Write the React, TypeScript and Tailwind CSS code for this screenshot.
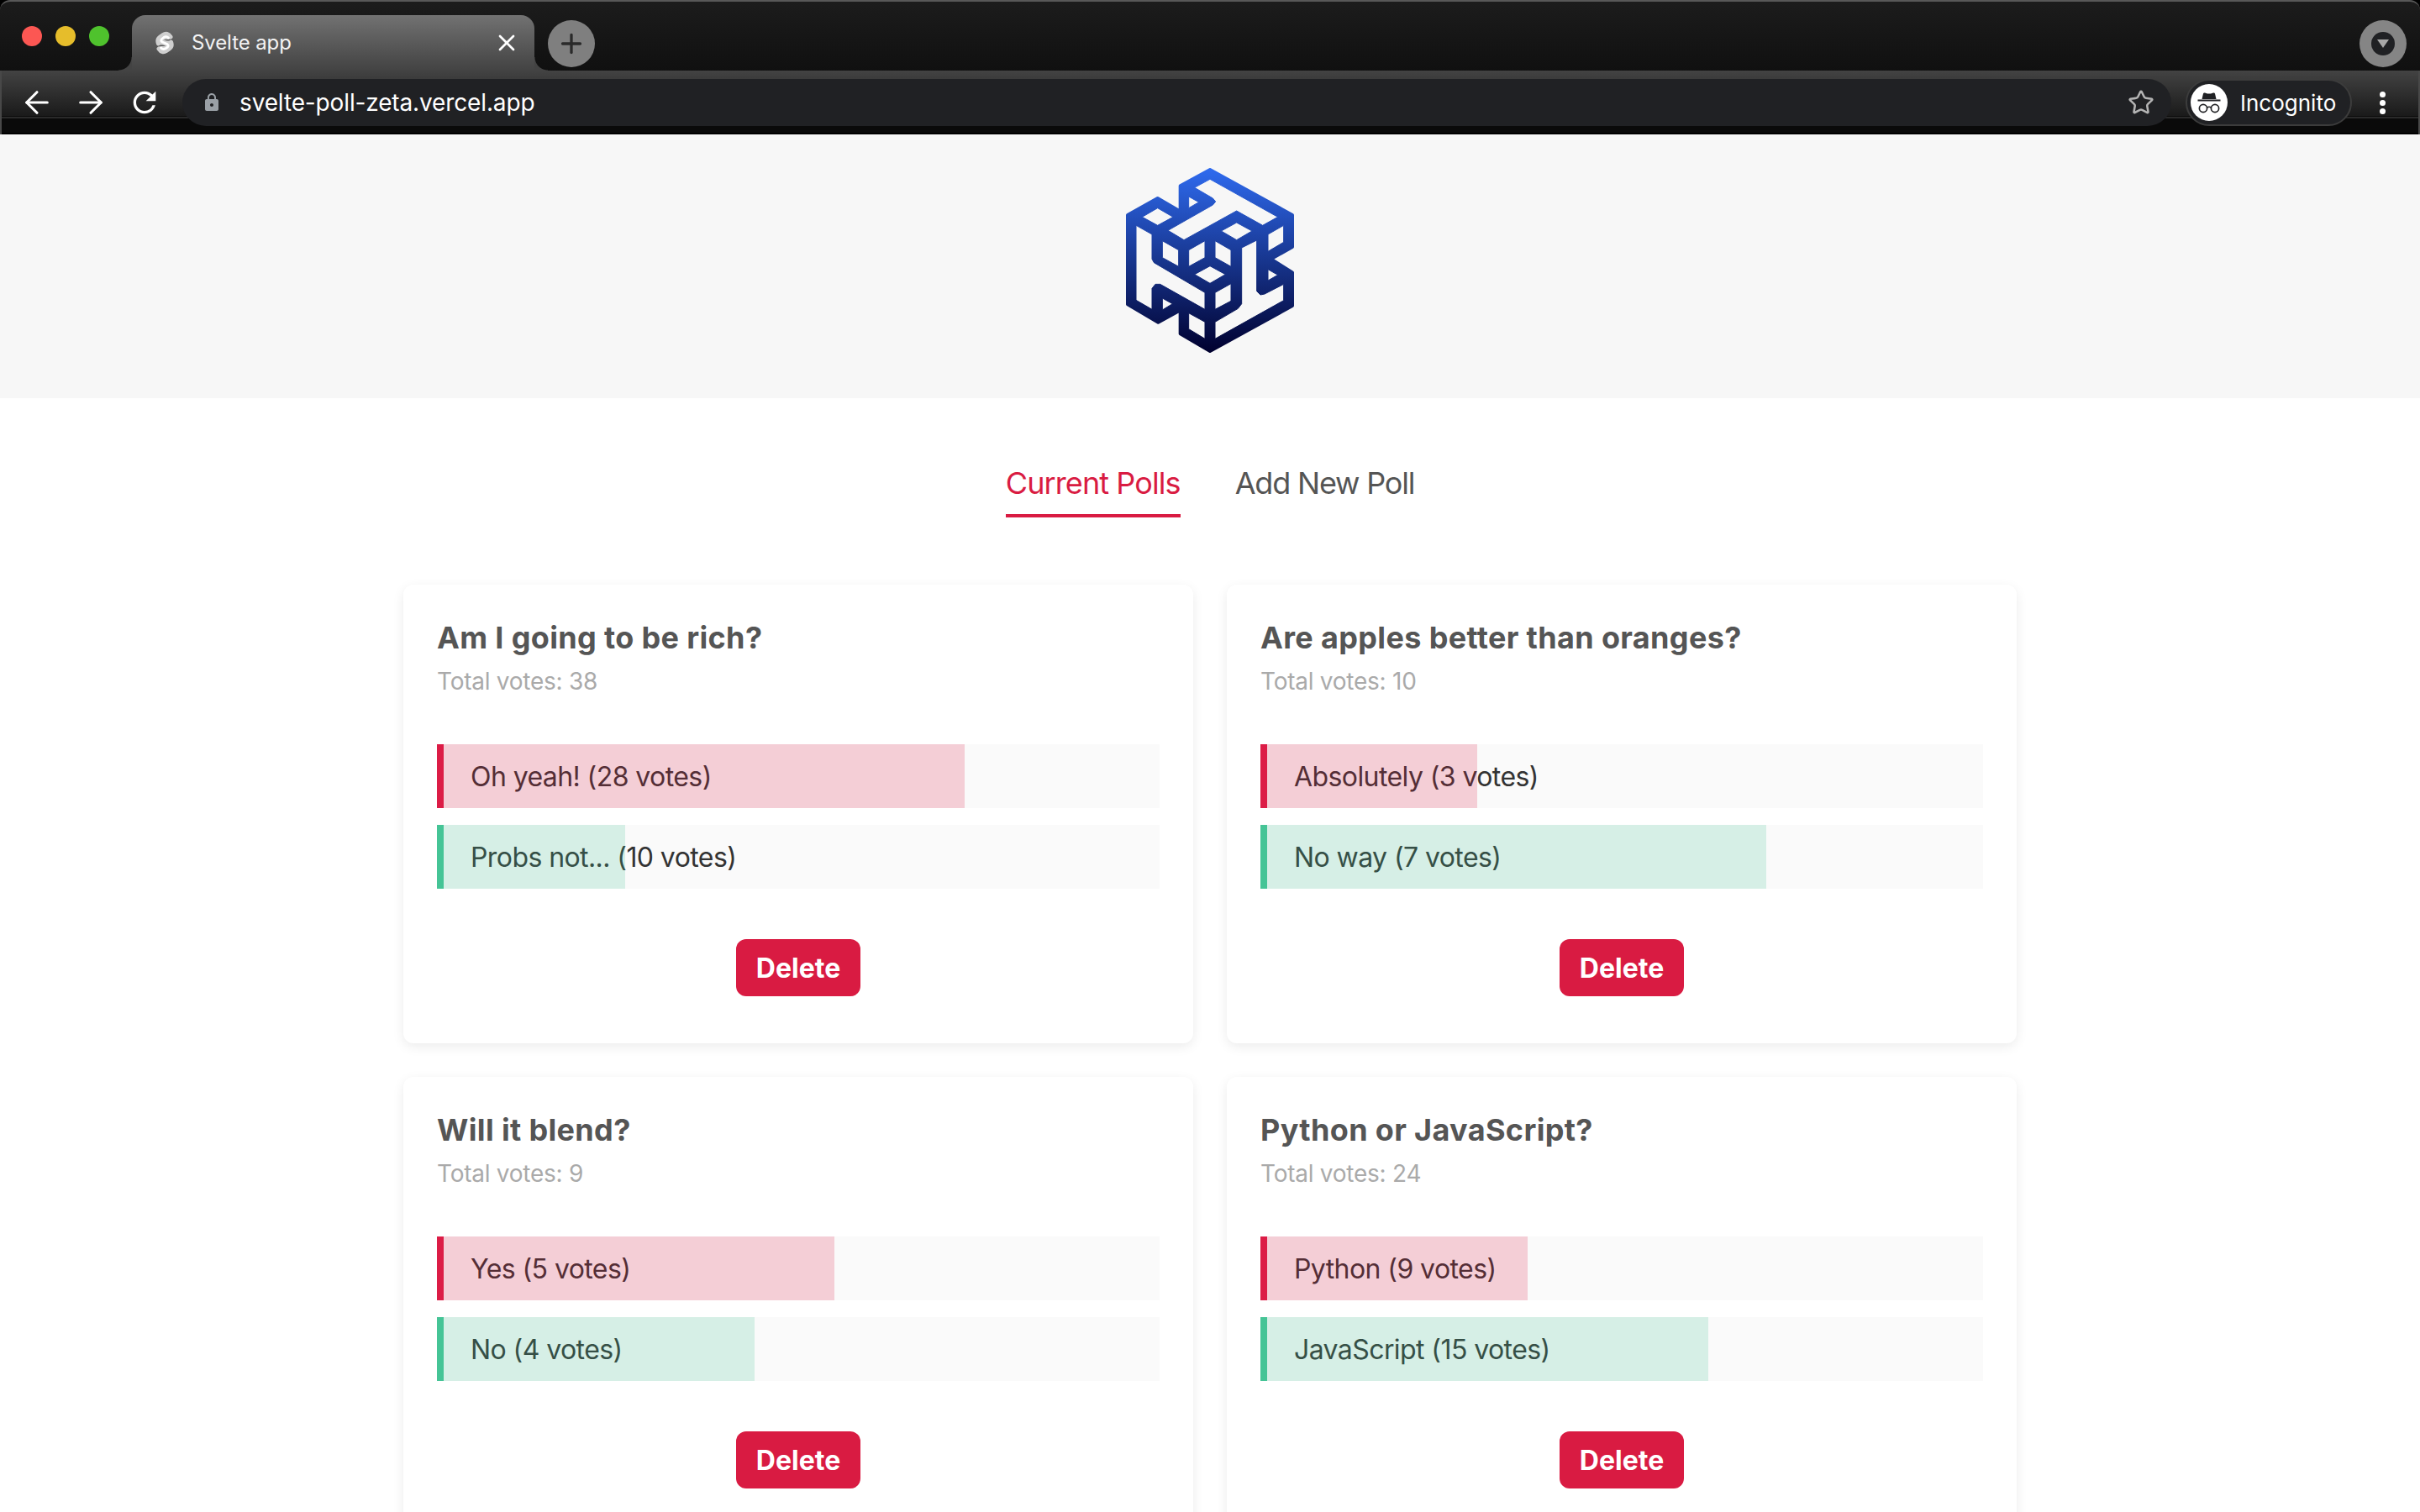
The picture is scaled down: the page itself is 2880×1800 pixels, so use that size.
import { ArrowLeft, ArrowRight, Plus, Star, X } from 'lucide-react';
import { MdLock, MdRefresh } from 'react-icons/md';

interface PollOption {
    label: string;
    votes: number;
}

interface Poll {
    question: string;
    options: [PollOption, PollOption];
}

const polls: Poll[] = [
    { question: 'Am I going to be rich?', options: [{ label: 'Oh yeah!', votes: 28 }, { label: 'Probs not...', votes: 10 }] },
    { question: 'Are apples better than oranges?', options: [{ label: 'Absolutely', votes: 3 }, { label: 'No way', votes: 7 }] },
    { question: 'Will it blend?', options: [{ label: 'Yes', votes: 5 }, { label: 'No', votes: 4 }] },
    { question: 'Python or JavaScript?', options: [{ label: 'Python', votes: 9 }, { label: 'JavaScript', votes: 15 }] },
];

// traced from the logo, in a 780 x 780 box
const logoOutline = '390,66 684,228 684,342 608,385 684,433 684,552 390,714 284,652 284,568 205,611 96,547 96,228 203,168 284,215 284,124';
const logoHoles = [
    '335,130 390,100 632,235 578,265 485,213 297,317 240,283 400,192 410,180 400,168',
    '314,162 350,182 314,203',
    '148,235 203,203 258,235 203,265',
    '597,297 653,265 653,325 597,358',
    '430,285 485,255 540,285 485,317',
    '220,320 278,353 278,412 220,380',
    '314,353 372,320 372,380 314,412',
    '408,320 465,353 465,412 408,380',
    '126,265 183,297 183,385 190,398 372,505 372,565 212,475 195,475 183,490 183,565 126,532',
    '335,440 390,410 445,440 390,472',
    '408,505 465,473 465,535 408,565',
    '503,345 557,318 557,500 570,513 585,510 653,475 653,533 408,670 408,610 490,562 503,545',
    '597,422 632,442 597,462',
    '220,525 256,545 220,567',
    '314,578 372,610 372,670 314,635',
];

function Logo() {
    return (
        <svg viewBox="90 60 600 660" className="w-[200px] h-[220px] mb-[14px]">
            <defs>
                <linearGradient id="logoFill" gradientUnits="userSpaceOnUse" x1="0" y1="60" x2="0" y2="720">
                    <stop offset="0" stopColor="#2f6bef" />
                    <stop offset="1" stopColor="#00002e" />
                </linearGradient>
            </defs>
            <polygon points={logoOutline} fill="url(#logoFill)" stroke="url(#logoFill)" strokeWidth="12" strokeLinejoin="round" />
            {logoHoles.map((points) => (
                <polygon key={points} points={points} fill="#f7f7f7" stroke="url(#logoFill)" strokeWidth="3" />
            ))}
        </svg>
    );
}

function SvelteFavicon() {
    return (
        <svg viewBox="0 0 24 30" className="w-6 h-[30px] shrink-0" fill="none" strokeLinecap="round" strokeLinejoin="round">
            <path d="M19 8 Q15 2 10 5.5 L6.5 8 Q2.5 11 4.5 16 M5 22 Q9 28 14 24.5 L17.5 22 Q21.5 19 19.5 14 M5 15 L19 15" stroke="#cfcfcf" strokeWidth="5" />
            <path d="M6 12 L18 18 M8 8 L16 8 M8 22 L16 22" stroke="#cfcfcf" strokeWidth="6" />
            <path d="M16.5 9 Q14 6.5 11 8.5 L8.5 10.5 Q7 12.5 9 14 L15 16.5 Q17 18 15.5 20 L13 21.8 Q10 23.5 7.5 21" stroke="#ffffff" strokeWidth="2.8" />
        </svg>
    );
}

function IncognitoIcon() {
    return (
        <svg viewBox="0 0 44 44" className="w-11 h-11">
            <circle cx="22" cy="22" r="22" fill="#ffffff" />
            <path d="M15 11.5 Q15.5 10 17 10.5 L20 11.5 H24 L27 10.5 Q28.5 10 29 11.5 L30.5 18 H13.5 Z" fill="#202124" />
            <rect x="8.5" y="18.5" width="27" height="2" fill="#202124" />
            <circle cx="15" cy="29" r="4.6" fill="none" stroke="#202124" strokeWidth="1.7" />
            <circle cx="29" cy="29" r="4.6" fill="none" stroke="#202124" strokeWidth="1.7" />
            <path d="M19.5 28 Q22 26.5 24.5 28" fill="none" stroke="#202124" strokeWidth="1.7" />
        </svg>
    );
}

function BrowserChrome() {
    return (
        <div className="h-[160px] shrink-0 flex flex-col bg-black font-['Inter',sans-serif]">
            {/* tab strip */}
            <div className="h-[84px] shrink-0 flex bg-gradient-to-b from-[#1c1c1c] to-[#101010] border-t-2 border-[#585858] rounded-t-xl">
                <div className="flex items-center gap-4 pl-[26px] w-[157px] shrink-0">
                    <span className="w-6 h-6 rounded-full bg-[#fc5753]" />
                    <span className="w-6 h-6 rounded-full bg-[#e6bd2b]" />
                    <span className="w-6 h-6 rounded-full bg-[#4fc22d]" />
                </div>
                <div className="relative mt-4 w-[479px] h-[66px] flex items-center pl-[27px] pr-[17px] rounded-t-2xl bg-gradient-to-b from-[#727272] to-[#434343]">
                    <div className="absolute -left-4 bottom-0 w-4 h-4 bg-[radial-gradient(circle_at_0_0,transparent_15px,#434343_16px)]" />
                    <div className="absolute -right-4 bottom-0 w-4 h-4 bg-[radial-gradient(circle_at_100%_0,transparent_15px,#434343_16px)]" />
                    <SvelteFavicon />
                    <span className="ml-5 text-[24px] tracking-[-0.1px] text-[#f2f2f2] grow">Svelte app</span>
                    <X className="w-8 h-8 text-white" strokeWidth={2} />
                </div>
                <div className="ml-4 mt-[22px] w-14 h-14 rounded-full bg-[#7f7f7f] flex items-center justify-center">
                    <Plus className="w-9 h-9 text-[#2a2a2a]" strokeWidth={2.2} />
                </div>
                <div className="ml-auto mr-4 mt-[22px] w-14 h-14 rounded-full bg-[#858585] flex items-center justify-center">
                    <div className="w-7 h-7 rounded-full bg-[#202124] flex items-center justify-center">
                        <div className="w-0 h-0 border-l-[7px] border-r-[7px] border-t-[10px] border-l-transparent border-r-transparent border-t-[#a8a8a8]" />
                    </div>
                </div>
            </div>
            {/* toolbar */}
            <div className="h-[76px] flex items-center border-x-2 border-[#484848] bg-[linear-gradient(to_bottom,#434343_0px,#1a1a1a_54px,#0c0c0c_54px,#0c0c0c_55px,#2a2a2a_55px,#2a2a2a_57px,#0a0a0a_57px,#0a0a0a_74px,#000000_74px)]">
                <div className="w-[215px] shrink-0 flex items-center pl-[21px]">
                    <ArrowLeft className="w-[42px] h-[42px] text-white" strokeWidth={1.8} />
                    <ArrowRight className="w-[42px] h-[42px] text-white ml-[22px]" strokeWidth={1.8} />
                    <MdRefresh className="w-10 h-10 text-white ml-[23px]" />
                </div>
                <div className="w-[2367px] h-14 flex items-center rounded-full bg-[#202124] pl-[23px] pr-5">
                    <MdLock className="w-6 h-6 text-[#9aa0a6]" />
                    <span className="ml-[21px] text-[28px] tracking-[-0.14px] text-white grow">svelte-poll-zeta.vercel.app</span>
                    <Star className="w-8 h-8 text-[#b4b4b4]" strokeWidth={1.9} />
                </div>
                <div className="ml-[17px] w-[198px] h-14 flex items-center rounded-full border-2 border-[#3c3c3c] bg-[#202124] pl-[4px]">
                    <IncognitoIcon />
                    <span className="ml-[15px] text-[26px] text-white">Incognito</span>
                </div>
                <div className="ml-[33px] flex flex-col gap-[3px]">
                    <span className="w-[7px] h-[7px] rounded-full bg-white" />
                    <span className="w-[7px] h-[7px] rounded-full bg-white" />
                    <span className="w-[7px] h-[7px] rounded-full bg-white" />
                </div>
            </div>
        </div>
    );
}

function OptionBar({ option, total, tone }: { option: PollOption; total: number; tone: 'red' | 'green' }) {
    const isRed = tone === 'red';
    // the fill sits over the label, which is why the text takes its tint
    const percent = Math.floor((option.votes / total) * 100);
    return (
        <div className="relative h-[76px] flex items-center pl-10 pt-[2px] bg-[#fafafa] text-[32px] tracking-[-0.58px] text-[#333333]">
            <span>{option.label} ({option.votes} votes)</span>
            <div
                className={`absolute left-0 top-0 h-full border-l-8 ${isRed ? 'border-[#dc1c46] bg-[#dc1c46]/20' : 'border-[#45c496] bg-[#45c496]/20'}`}
                style={{ width: `${percent}%` }}
            />
        </div>
    );
}

function PollCard({ poll }: { poll: Poll }) {
    const total = poll.options[0].votes + poll.options[1].votes;
    return (
        <div className="flex flex-col h-[546px] p-10 bg-white rounded-xl shadow-[0_4px_14px_rgba(0,0,0,0.08)]">
            <h3 className="mt-px text-[36px] leading-[44px] font-bold tracking-[0.35px] text-[#555555]">{poll.question}</h3>
            <p className="mt-[10px] text-[28px] leading-[40px] tracking-[-0.25px] text-[#aaaaaa]">Total votes: {total}</p>
            <div className="mt-[55px] flex flex-col gap-5">
                <OptionBar option={poll.options[0]} total={total} tone="red" />
                <OptionBar option={poll.options[1]} total={total} tone="green" />
            </div>
            <button className="mt-[60px] self-center w-[148px] h-[68px] pt-[2px] rounded-xl bg-[#d91b42] text-[32px] font-bold text-white">
                Delete
            </button>
        </div>
    );
}

export default function App() {
    return (
        <div className="h-screen overflow-hidden flex flex-col bg-white font-['Inter',sans-serif]">
            <BrowserChrome />
            <header className="h-[314px] shrink-0 flex items-center justify-center bg-[#f7f7f7]">
                <Logo />
            </header>
            <nav className="mt-[79px] flex justify-center gap-[65px] text-[36px] leading-[44px]">
                <span className="pb-[15px] border-b-4 border-[#d91b42] tracking-[-0.9px] text-[#d91b42]">Current Polls</span>
                <span className="tracking-[-1.2px] text-[#555555]">Add New Poll</span>
            </nav>
            <main className="mt-20 w-[1920px] mx-auto grid grid-cols-2 gap-x-10 gap-y-10">
                {polls.map((poll) => (
                    <PollCard key={poll.question} poll={poll} />
                ))}
            </main>
        </div>
    );
}
